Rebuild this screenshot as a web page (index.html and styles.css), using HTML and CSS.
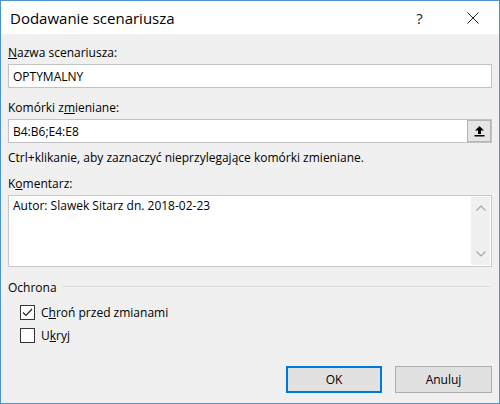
FILE: index.html
```html
<!DOCTYPE html>
<html>
<head>
    <title>Dodawanie scenariusza</title>
    <link rel="stylesheet" href="styles.css">
</head>
<body>
    <div class="dialog">
        <div class="titlebar">
            <span class="title">Dodawanie scenariusza</span>
            <span class="tb-btn help">?</span>
            <span class="tb-btn close">
                <svg width="12" height="12" viewBox="0 0 12 12">
                    <path d="M0.5 0.5 L11.5 11.5 M11.5 0.5 L0.5 11.5" stroke="#222" stroke-width="1" fill="none"/>
                </svg>
            </span>
        </div>

        <div class="content">
            <div class="field-label"><u>N</u>azwa scenariusza:</div>
            <div class="textbox">OPTYMALNY</div>

            <div class="field-label spaced">Komórki z<u>m</u>ieniane:</div>
            <div class="textbox">
                <span class="value">B4:B6;E4:E8</span>
                <span class="ref-btn">
                    <svg width="11" height="12" viewBox="0 0 11 12">
                        <path d="M5.5 1 L10 5.5 L7 5.5 L7 9 L4 9 L4 5.5 L1 5.5 Z" fill="#000"/>
                        <rect x="0.5" y="10" width="10" height="1.5" fill="#000"/>
                    </svg>
                </span>
            </div>

            <div class="hint">Ctrl+klikanie, aby zaznaczyć nieprzylegające komórki zmieniane.</div>

            <div class="field-label spaced-small">K<u>o</u>mentarz:</div>
            <div class="memo">
                <span class="memo-text">Autor: Slawek Sitarz dn. 2018-02-23</span>
                <div class="scrollbar">
                    <svg width="10" height="6" viewBox="0 0 10 6">
                        <path d="M0.5 5.5 L5 1 L9.5 5.5" stroke="#a6a6a6" stroke-width="1.2" fill="none"/>
                    </svg>
                    <svg width="10" height="6" viewBox="0 0 10 6">
                        <path d="M0.5 0.5 L5 5 L9.5 0.5" stroke="#a6a6a6" stroke-width="1.2" fill="none"/>
                    </svg>
                </div>
            </div>

            <div class="group-title">
                <span>Ochrona</span>
                <span class="group-line"></span>
            </div>

            <div class="check-row first">
                <span class="checkbox">
                    <svg width="13" height="13" viewBox="0 0 13 13">
                        <path d="M2 6.5 L5 9.5 L11 3" stroke="#222" stroke-width="1.2" fill="none"/>
                    </svg>
                </span>
                <span>C<u>h</u>roń przed zmianami</span>
            </div>
            <div class="check-row">
                <span class="checkbox"></span>
                <span>U<u>k</u>ryj</span>
            </div>

            <div class="buttons">
                <button type="button" class="btn default">OK</button>
                <button type="button" class="btn">Anuluj</button>
            </div>
        </div>
    </div>
</body>
</html>
```

FILE: styles.css
```css
body {
    margin: 0;
    font-family: "Open Sans", "Noto Sans", sans-serif;
    font-size: 12px;
    color: #000;
}

.dialog {
    width: 500px;
    height: 404px;
    box-sizing: border-box;
    border: 1px solid #4d93cf;
    background-color: #f0f0f0;
    display: flex;
    flex-direction: column;
}

.titlebar {
    height: 33px;
    background-color: #fff;
    display: flex;
    align-items: center;
    padding-left: 9px;
}

.title {
    flex: 1;
    font-size: 15px;
}

.tb-btn {
    display: flex;
    align-items: center;
    justify-content: center;
    height: 33px;
}

.help {
    width: 55px;
    font-size: 15px;
    color: #222;
}

.close {
    width: 52px;
}

.content {
    flex: 1;
    padding: 11px 7px 10px;
    display: flex;
    flex-direction: column;
}

.field-label {
    line-height: 16px;
    margin-bottom: 3px;
}

.field-label.spaced {
    margin-top: 12px;
}

.field-label.spaced-small {
    margin-top: 10px;
    margin-bottom: 3px;
}

.textbox {
    height: 24px;
    box-sizing: border-box;
    border: 1px solid #c2c2c2;
    background-color: #fff;
    padding-left: 4px;
    display: flex;
    align-items: center;
}

.textbox .value {
    flex: 1;
}

.ref-btn {
    width: 24px;
    height: 22px;
    box-sizing: border-box;
    border: 1px solid #b4b4b4;
    background-color: #e6e6e6;
    display: flex;
    align-items: center;
    justify-content: center;
}

.hint {
    line-height: 16px;
    margin-top: 7px;
}

.memo {
    height: 72px;
    box-sizing: border-box;
    border: 1px solid #c8c8c8;
    background-color: #fff;
    display: flex;
    padding: 2px 1px 1px 4px;
}

.memo-text {
    flex: 1;
    line-height: 16px;
}

.scrollbar {
    width: 19px;
    background-color: #f0f0f0;
    display: flex;
    flex-direction: column;
    align-items: center;
    justify-content: space-between;
    padding: 8px 0;
    margin: -1px 0 0;
}

.group-title {
    display: flex;
    align-items: center;
    line-height: 16px;
    margin-top: 13px;
    padding-right: 1px;
}

.group-line {
    flex: 1;
    border-top: 1px solid #dcdcdc;
    margin-left: 5px;
    margin-top: -3px;
}

.check-row {
    display: flex;
    align-items: center;
    gap: 6px;
    padding-left: 12px;
    height: 23px;
}

.check-row.first {
    margin-top: 5px;
}

.checkbox {
    width: 15px;
    height: 15px;
    box-sizing: border-box;
    border: 1px solid #333;
    background-color: #fff;
    display: flex;
    align-items: center;
    justify-content: center;
}

.buttons {
    margin-top: auto;
    display: flex;
    justify-content: flex-end;
    gap: 13px;
}

.btn {
    width: 97px;
    height: 27px;
    font-family: inherit;
    font-size: 12px;
    color: #000;
    background-color: #e1e1e1;
    border: 1px solid #adadad;
    padding: 0;
}

.btn.default {
    width: 96px;
    border-color: #0078d7;
    box-shadow: inset 0 0 0 1px #0078d7;
}
```
